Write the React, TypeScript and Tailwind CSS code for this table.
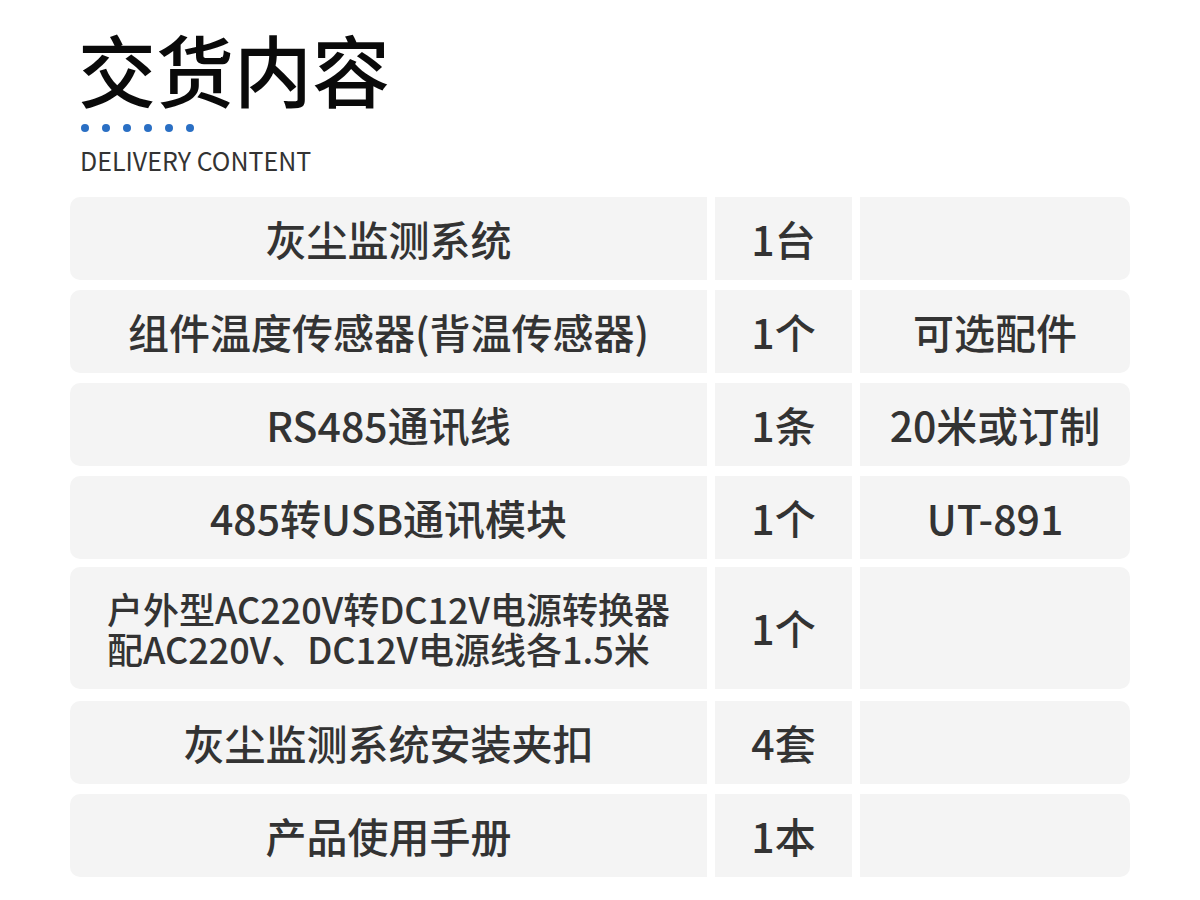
const rows: { name: string[]; qty: string; note: string }[] = [
  { name: ["灰尘监测系统"], qty: "1台", note: "" },
  { name: ["组件温度传感器(背温传感器)"], qty: "1个", note: "可选配件" },
  { name: ["RS485通讯线"], qty: "1条", note: "20米或订制" },
  { name: ["485转USB通讯模块"], qty: "1个", note: "UT-891" },
  {
    name: ["户外型AC220V转DC12V电源转换器", "配AC220V、DC12V电源线各1.5米"],
    qty: "1个",
    note: "",
  },
  { name: ["灰尘监测系统安装夹扣"], qty: "4套", note: "" },
  { name: ["产品使用手册"], qty: "1本", note: "" },
];

export default function App() {
  return (
    <div
      className="w-[1200px] h-[900px] bg-white overflow-hidden"
      style={{ fontFamily: '"Noto Sans CJK SC", "Noto Sans", sans-serif' }}
    >
      {/* 제목 영역 */}
      <div className="pl-[78px] pt-[20px]">
        <h1 className="text-[78px] leading-[96px] font-medium text-[#0a0a0a]">交货内容</h1>
        <div className="flex gap-[13px] pl-[3px] mt-[8px]">
          {[0, 1, 2, 3, 4, 5].map((i) => (
            <span key={i} className="w-[8px] h-[8px] rounded-full bg-[#2a6fc4]"></span>
          ))}
        </div>
        <p className="text-[25px] leading-[36px] text-[#333] mt-[10px] pl-[2px]">DELIVERY CONTENT</p>
      </div>

      {/* 표 */}
      <div className="mt-[19px] px-[70px] flex flex-col gap-[10px]">
        {rows.map((r, idx) => (
          <div
            key={idx}
            className={`flex gap-[8px] text-[#333] font-medium ${r.name.length > 1 ? "h-[122px] -mt-[2px] mb-[2px]" : "h-[83px]"}`}
          >
            <div className="w-[637px] bg-[#f4f4f4] rounded-l-[10px] flex items-center justify-center">
              {r.name.length > 1 ? (
                <div className="text-left text-[36px] leading-[40px]">
                  {r.name.map((l) => (
                    <div key={l}>{l}</div>
                  ))}
                </div>
              ) : (
                <span className="text-[41px]">{r.name[0]}</span>
              )}
            </div>
            <div className="w-[137px] bg-[#f4f4f4] flex items-center justify-center text-[41px]">
              {r.qty}
            </div>
            <div className="w-[270px] bg-[#f4f4f4] rounded-r-[10px] flex items-center justify-center text-[41px]">
              {r.note}
            </div>
          </div>
        ))}
      </div>
    </div>
  );
}
